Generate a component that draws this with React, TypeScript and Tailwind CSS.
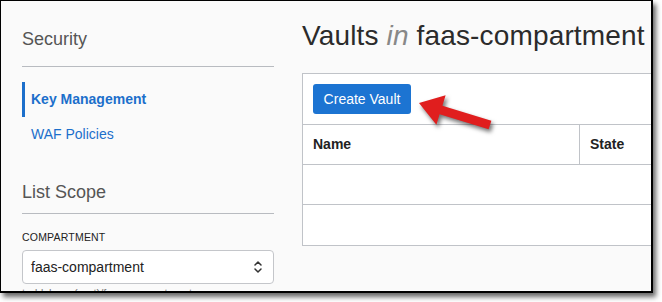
import React from "react";

const font = { fontFamily: '"Liberation Sans", Arial, sans-serif' };

function UpDown() {
  return (
    <svg width="10" height="14" viewBox="0 0 10 14" fill="none" stroke="#333" strokeWidth="1.5" strokeLinecap="round" strokeLinejoin="round">
      <path d="M2 5 L5 2 L8 5" />
      <path d="M2 9 L5 12 L8 9" />
    </svg>
  );
}

function Arrow() {
  // tip at left, tail at bottom-right
  return (
    <svg
      className="absolute left-0 top-0 pointer-events-none drop-shadow-[2px_3px_2px_rgba(0,0,0,0.55)]"
      width="662"
      height="302"
      viewBox="0 0 662 302"
    >
      <polygon
        fill="#e01e1e"
        points="419,103 445.6,95.2 442.4,105.7 491.4,120.7 488.6,129.3 439.6,114.3 436.4,124.8"
      />
    </svg>
  );
}

export default function App() {
  return (
    <div className="relative h-[302px] w-[662px] bg-white" style={font}>
      <div className="h-[293px] w-[653px] overflow-hidden border-l border-t border-r-2 border-b-2 border-black bg-[#fafafa] shadow-[3px_4px_5px_rgba(0,0,0,0.6)]">
        <div className="flex">
          {/* Sidebar */}
          <aside className="w-[273px] shrink-0 pl-[21px] pt-[26px]">
            <h2 className="text-[18px] leading-6 text-[#555]">Security</h2>
            <div className="mt-[15px] h-px w-[252px] bg-[#b8bbc0]" />
            <nav className="mt-[15px] flex flex-col">
              <a className="flex h-[35px] items-center border-l-[3px] border-[#1c6fcb] pl-[6px] text-[14px] font-bold text-[#1c6fcb]">
                Key Management
              </a>
              <a className="flex h-[35px] items-center pl-[9px] text-[14px] text-[#1c6fcb]">
                WAF Policies
              </a>
            </nav>
            <h2 className="mt-[28px] text-[18px] leading-6 text-[#555]">List Scope</h2>
            <div className="mt-[9px] h-px w-[252px] bg-[#b8bbc0]" />
            <div className="mt-[17px] text-[10.5px] leading-3 tracking-[0.2px] text-[#222]">COMPARTMENT</div>
            <div className="mt-[7px] flex h-[34px] w-[252px] items-center justify-between rounded-[4px] border border-[#c4c6ca] bg-white pl-[8px] pr-[10px]">
              <span className="text-[14px] text-[#222]">faas-compartment</span>
              <UpDown />
            </div>
            <div className="mt-[1px] text-[11px] leading-4 text-[#777]">toddsharp (root)/faas-compartment</div>
          </aside>

          {/* Main */}
          <main className="flex-1 pl-[28px] pt-[19px]">
            <h1 className="whitespace-nowrap text-[28px] leading-8 tracking-[0.15px] text-[#2b2b2b]">
              Vaults <span className="italic text-[#888]">in</span> faas-compartment
            </h1>
            <div className="mt-[21px] w-[400px] border border-[#c0c3c8] bg-white">
              <div className="border-b border-[#c0c3c8] p-[10px]">
                <button className="h-[30px] w-[98px] rounded-[3px] bg-[#1c74d2] text-[14px] text-white">
                  Create Vault
                </button>
              </div>
              <div className="flex h-[40px] border-b border-[#c0c3c8]">
                <div className="flex w-[277px] items-center border-r border-[#c0c3c8] pl-[10px] text-[14px] font-bold text-[#222]">
                  Name
                </div>
                <div className="flex items-center pl-[10px] text-[14px] font-bold text-[#222]">State</div>
              </div>
              <div className="h-[40px] border-b border-[#c0c3c8]" />
              <div className="h-[40px]" />
            </div>
          </main>
        </div>
      </div>
      <Arrow />
    </div>
  );
}
